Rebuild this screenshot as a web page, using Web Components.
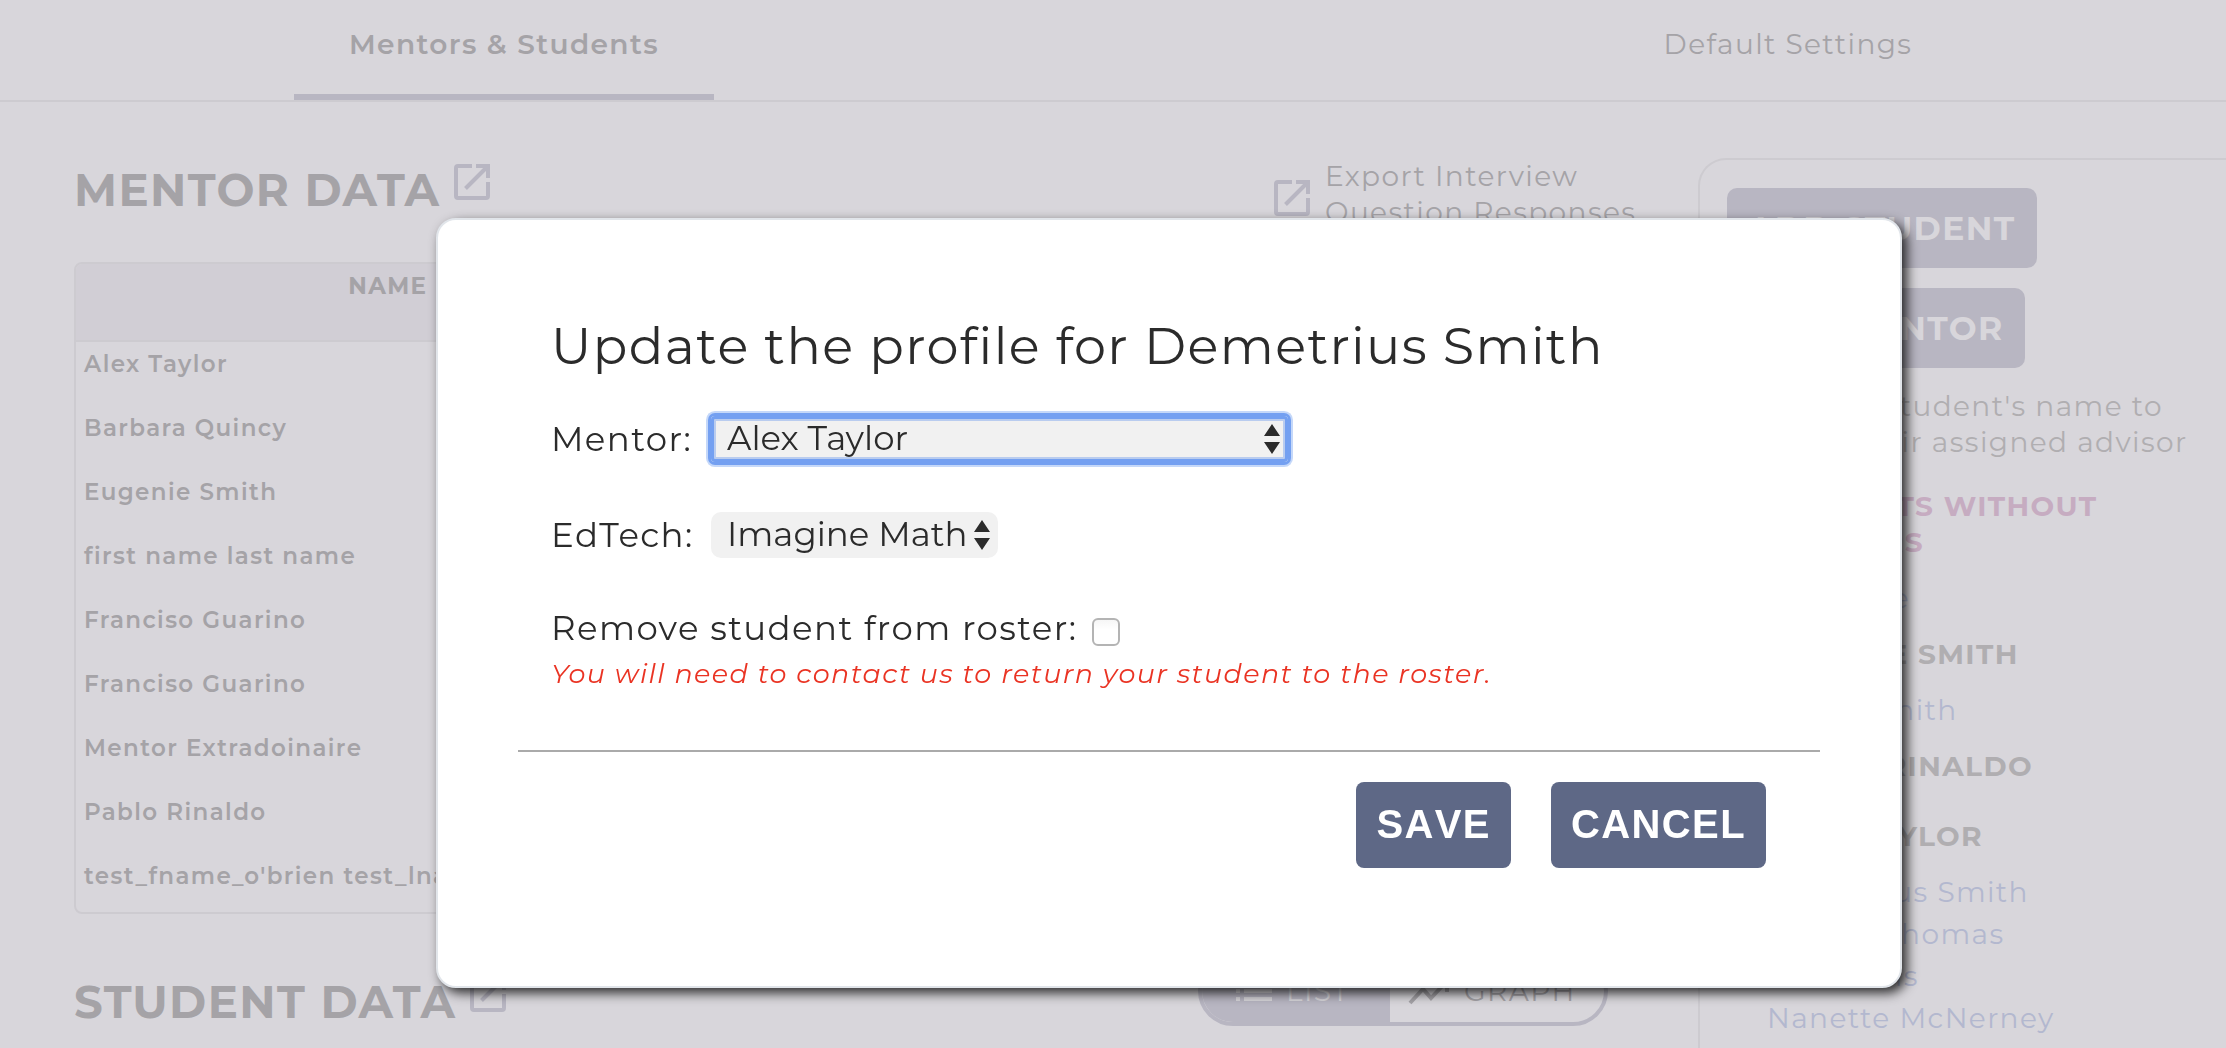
<!DOCTYPE html>
<html lang="en">
<head>
<meta charset="utf-8">
<meta name="viewport" content="width=device-width, initial-scale=1">
<title>Mentors &amp; Students</title>
<style>
  :root {
    --page: #d8d6db;
    --ink-faded: #a5a3a7;
    --ink-side: #b0aeb1;
    --accent-faded: #b8b6c2;
    --line: #cdcbd0;
    --head: #d1ced5;
    --link: #b3b8cf;
    --pink: #c6acc1;
    --ink: #2b2b2b;
    --primary: #5e6886;
  }
  html, body { height: 100%; }
  body {
    margin: 0;
    overflow: hidden;
    background: var(--page);
    color: var(--ink-faded);
    font: 400 28px/36px Montserrat, Inter, sans-serif;
    letter-spacing: .05em;
  }
</style>
</head>
<body>
<mentor-app></mentor-app>

<script>
const define = (name, html, setup) => {
  const tpl = document.createElement('template');
  tpl.innerHTML = html;
  customElements.define(name, class extends HTMLElement {
    constructor() {
      super();
      this.attachShadow({ mode: 'open' }).append(tpl.content.cloneNode(true));
    }
    connectedCallback() {
      if (setup && !this.ready) { this.ready = true; setup(this, this.shadowRoot); }
    }
  });
};

define('export-icon', `
  <style>
    :host { display: block; flex: none; width: 36px; height: 36px; color: var(--accent-faded); }
    svg { display: block; }
  </style>
  <svg width="36" height="36" viewBox="0 0 36 36" fill="none" stroke="currentColor" stroke-width="4" aria-hidden="true">
    <path d="M18 2H4Q2 2 2 4V32Q2 34 4 34H32Q34 34 34 32V18M22 2H34V14M33 3 11.500 24.500"/>
  </svg>`);

define('tab-bar', `
  <style>
    :host { display: block; border-bottom: 2px solid var(--line); }
    nav { display: grid; grid-template-columns: 1008fr 342fr 876fr; height: 100px; }
    a { box-sizing: border-box; justify-self: center; min-width: 420px; height: 100px; padding-top: 26px;
        color: inherit; text-align: center; text-decoration: none; }
    a[aria-current] { font-weight: 600; border-bottom: 6px solid var(--accent-faded); }
    a:last-child { grid-column: 3; }
  </style>
  <nav aria-label="Sections">
    <a href="#mentors" aria-current="page">Mentors &amp; Students</a>
    <a href="#defaults">Default Settings</a>
  </nav>`);

define('section-title', `
  <style>
    :host { display: flex; gap: 14px; padding-top: 4px; }
    h2 { margin: 0; font-size: 45px; line-height: 56px; font-weight: 700; }
    export-icon { margin-top: 2px; }
  </style>
  <h2><slot></slot></h2><export-icon></export-icon>`);

define('export-link', `
  <style>
    :host { display: block; }
    a { display: flex; gap: 15px; color: inherit; text-decoration: none; }
    export-icon { margin-top: 22px; }
    span { width: 312px; }
  </style>
  <a href="#export"><export-icon></export-icon><span><slot></slot></span></a>`);

define('mentor-table', `
  <style>
    :host { display: block; border: 2px solid var(--line); border-radius: 8px; overflow: hidden;
            font-size: 23px; line-height: 28px; }
    table { width: 100%; border-collapse: collapse; table-layout: fixed; }
    th, td { padding: 8px 8px 0; text-align: left; vertical-align: top; font-weight: 600; white-space: nowrap; }
    th { height: 68px; font-weight: 700; background: var(--head);
         border-bottom: 2px solid var(--line); text-align: center; }
    td { height: 56px; }
    tr:last-child td { height: 50px; }
  </style>
  <table>
    <colgroup><col style="width:40%"><col></colgroup>
    <thead><tr><th scope="col">NAME</th><th></th></tr></thead>
    <tbody></tbody>
  </table>`, (el, root) => {
    const body = root.querySelector('tbody');
    ['Alex Taylor', 'Barbara Quincy', 'Eugenie Smith', 'first name last name', 'Franciso Guarino',
     'Franciso Guarino', 'Mentor Extradoinaire', 'Pablo Rinaldo', "test_fname_o'brien test_lname"].forEach(name => {
      const row = body.insertRow();
      row.insertCell().textContent = name;
      row.insertCell();
    });
  });

define('view-toggle', `
  <style>
    :host { display: flex; box-sizing: border-box; width: 410px; height: 70px; border: 4px solid var(--accent-faded);
            border-radius: 35px; overflow: hidden; }
    button { display: flex; align-items: center; gap: 14px; margin: 0; border: 0; background: none;
             font: inherit; letter-spacing: inherit; color: var(--ink-faded); padding: 0 0 0 18px; flex: 1; }
    button[aria-pressed=true] { flex: none; width: 188px; padding-left: 34px; background: var(--accent-faded); color: var(--page); }
    svg { flex: none; }
  </style>
  <button type="button" aria-pressed="true">
    <svg width="36" height="24" viewBox="0 0 36 24" fill="currentColor" aria-hidden="true"><path d="M0 2h4v4H0zM8 2h28v4H8zM0 10h4v4H0zM8 10h28v4H8zM0 18h4v4H0zM8 18h28v4H8z"/></svg>LIST</button>
  <button type="button" aria-pressed="false">
    <svg width="42" height="28" viewBox="0 0 42 28" fill="none" stroke="currentColor" stroke-width="4" aria-hidden="true"><path d="M2 26 15 12 23 21 38 5M28 4H39V15"/></svg>GRAPH</button>`);

define('side-button', `
  <style>
    :host { display: block; }
    button { display: block; height: 80px; padding: 0 21px; border: 0; border-radius: 10px; background: var(--accent-faded);
             color: var(--page); font: inherit; font-size: 33px; font-weight: 700; letter-spacing: inherit; }
  </style>
  <button type="button"><slot></slot></button>`);

define('mentor-group', `
  <style>
    :host { display: block; margin-top: 20px; padding: 0 80px 0 40px; }
    :host([empty]) { padding-bottom: 14px; }
    :host([alert]) { margin-top: 28px; --ink-side: var(--pink); }
    h3 { margin: 0; font: inherit; font-weight: 700; color: var(--ink-side); }
    ul { display: flex; flex-direction: column; gap: 6px; margin: 20px 0 0; padding: 0; list-style: none; }
    :host([empty]) ul { display: none; }
    a { color: var(--link); text-decoration: none; }
  </style>
  <h3></h3><ul></ul>`, (el, root) => {
    root.querySelector('h3').textContent = el.getAttribute('name');
    (el.getAttribute('students') || '').split(',').filter(Boolean).forEach(s => {
      const li = document.createElement('li'), a = document.createElement('a');
      a.href = '#student'; a.textContent = s; li.append(a);
      root.querySelector('ul').append(li);
    });
  });

define('roster-card', `
  <style>
    :host { display: block; box-sizing: border-box; padding: 28px 20px 60px 27px; border: 2px solid var(--line);
            border-width: 2px 0 0 2px; border-radius: 28px 0 0 0; color: var(--ink-side); }
    side-button + side-button { margin-top: 20px; }
    p { margin: 20px 0 0; }
  </style>
  <side-button>ADD STUDENT</side-button>
  <side-button>ADD MENTOR</side-button>
  <p>Click on a student's name to change their assigned advisor</p>
  <mentor-group alert name="STUDENTS WITHOUT MENTORS" students="Joan Doe"></mentor-group>
  <mentor-group name="EUGENIE SMITH" students="Robin Smith"></mentor-group>
  <mentor-group empty name="PABLO RINALDO"></mentor-group>
  <mentor-group name="ALEX TAYLOR" students="Demetrius Smith,Jessica Thomas,Carl Davis,Nanette McNerney"></mentor-group>`);

define('select-field', `
  <style>
    :host { display: grid; grid-template-columns: 160px minmax(0, max-content); align-items: center; height: 46px; }
    :host([wide]) { grid-template-columns: 160px 577px; }
    .box { display: grid; align-items: center; }
    select { grid-area: 1 / 1; appearance: none; box-sizing: border-box; min-width: 100%; height: 46px; margin: 0; padding: 0 30px 2px 16px; border: 0; border-radius: 10px;
             background: #f1f1f1; color: inherit; font: inherit; line-height: 44px; letter-spacing: 0; outline: none; }
    :host([wide]) select { border-radius: 4px;
             box-shadow: inset 0 0 0 3px #74a0f1, inset 0 0 0 5px #b9ccef, 0 0 0 3px #74a0f1, 0 0 0 5px #c5d8f9; }
    svg { grid-area: 1 / 1; justify-self: end; margin-right: 8px; pointer-events: none; }
  </style>
  <label for="field"></label>
  <div class="box">
    <select id="field"></select>
    <svg width="16" height="30" viewBox="0 0 16 30" fill="currentColor" aria-hidden="true"><path d="M8 0 16 12H0zM8 30 0 18H16z"/></svg>
  </div>`, (el, root) => {
    root.querySelector('label').textContent = el.getAttribute('label');
    root.querySelector('select').add(new Option(el.getAttribute('value')));
  });

define('remove-field', `
  <style>
    :host { display: block; }
    div { display: flex; align-items: center; gap: 15px; height: 40px; }
    input { appearance: none; box-sizing: border-box; width: 28px; height: 28px; margin: 8px 0 0; border: 2px solid #b4b4b4; border-radius: 6px;
            background: linear-gradient(#f6f6f6, #fff 40%); }
    p { margin: 8px 0 0; font-size: 27px; line-height: 36px; font-style: italic; color: #ea3323; }
  </style>
  <div><label for="remove">Remove student from roster:</label><input type="checkbox" id="remove"></div>
  <p>You will need to contact us to return your student to the roster.</p>`);

define('action-button', `
  <style>
    :host { display: block; }
    button { display: block; padding: 18px 20px 20px; border: 0; border-radius: 8px; background: var(--primary); color: #fff;
             font: 700 40px/48px Arial, "Liberation Sans", sans-serif; font-kerning: none; letter-spacing: inherit; }
  </style>
  <button type="button"><slot></slot></button>`);

define('profile-dialog', `
  <style>
    :host { position: fixed; inset: 0; display: grid; align-items: start; padding: 218px 324px 0 436px; }
    section { padding: 94px 80px 118px; background: #fff; border: 2px solid #e1e5ea; border-radius: 20px;
              box-shadow: 5px 5px 12px rgba(0, 0, 0, .8); color: var(--ink); font-size: 34px; line-height: 40px; }
    h1 { margin: 0 0 38px; font-size: 51px; line-height: 64px; font-weight: 400; }
    .fields { display: flex; flex-direction: column; gap: 50px; padding: 0 33px; }
    .title { padding: 0 33px; }
    hr { height: 2px; margin: 58px 0 30px; border: 0; background: #aaa; }
    .actions { display: flex; justify-content: flex-end; gap: 40px; padding-right: 54px; }
  </style>
  <section role="dialog" aria-modal="true" aria-labelledby="title">
    <div class="title"><h1 id="title">Update the profile for Demetrius Smith</h1></div>
    <div class="fields">
      <select-field wide label="Mentor:" value="Alex Taylor"></select-field>
      <select-field label="EdTech:" value="Imagine Math"></select-field>
      <remove-field></remove-field>
    </div>
    <hr>
    <div class="actions"><action-button>SAVE</action-button><action-button>CANCEL</action-button></div>
  </section>`);

define('mentor-app', `
  <style>
    :host { display: block; }
    main { display: grid; grid-template-columns: minmax(0, 1fr) 528px; gap: 61px; align-items: start; padding: 56px 0 0 74px; }
    .row { display: flex; justify-content: space-between; align-items: flex-start; margin-bottom: 32px; }
    .row.students { align-items: flex-end; margin: 42px 0 0; }
    view-toggle { margin: 0 29px 4px 0; }
  </style>
  <tab-bar></tab-bar>
  <main>
    <div>
      <div class="row"><section-title>MENTOR DATA</section-title><export-link>Export Interview Question Responses</export-link></div>
      <mentor-table></mentor-table>
      <div class="row students"><section-title>STUDENT DATA</section-title><view-toggle></view-toggle></div>
    </div>
    <roster-card></roster-card>
  </main>
  <profile-dialog></profile-dialog>`);
</script>
</body>
</html>
